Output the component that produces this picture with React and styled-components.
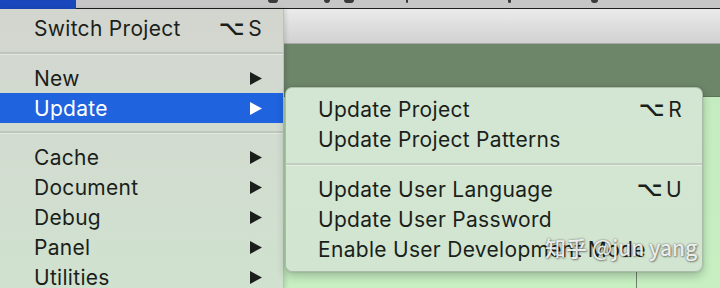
import React from 'react';
import styled, { createGlobalStyle } from 'styled-components';

const GlobalStyle = createGlobalStyle`
    html, body {
        margin: 0;
        padding: 0;
        width: 720px;
        height: 288px;
        overflow: hidden;
        background: #c7eec2;
    }
    * {
        box-sizing: border-box;
    }
`;

const Screen = styled.div`
    position: relative;
    width: 720px;
    height: 288px;
    display: flex;
    flex-direction: column;
    overflow: hidden;
    font-family: "Inter", "Liberation Sans", "DejaVu Sans", sans-serif;
    color: #1b1f1b;
`;

const MenuBar = styled.div`
    height: 9px;
    flex: none;
    display: flex;
    background: #c6c6c6;
`;

const MenuBarTitle = styled.div`
    width: 76px;
    background: #1a47bb;
`;

const MenuBarIcons = styled.div`
    flex: 1;
    display: flex;
    align-items: flex-start;
    padding-left: 192px;
    border-bottom: 1px solid #1e1e1e;
`;

const TrayGlyph = styled.div`
    width: ${p => p.w}px;
    height: 3px;
    margin-left: ${p => p.gap}px;
    background: #3a3a3a;
    border-radius: 0 0 3px 3px;
`;

const Body = styled.div`
    flex: 1;
    display: flex;
    min-height: 0;
`;

const MainMenu = styled.div`
    width: 284px;
    flex: none;
    padding-top: 4px;
    background: linear-gradient(180deg, #d3d5cf 0%, #d2dbd0 40%, #d0e2cf 100%);
    border-right: 1px solid #b9c2b6;
    box-shadow: 2px 0 4px rgba(0, 0, 0, 0.12);
    z-index: 1;
`;

const Row = styled.div`
    height: 30px;
    display: flex;
    align-items: center;
    padding-left: ${p => p.$indent}px;
    padding-right: ${p => p.$right}px;
    font-size: 21px;
    letter-spacing: 0.3px;
    background: ${p => (p.$active ? '#1f63df' : 'transparent')};
    color: ${p => (p.$active ? '#ffffff' : '#1b1f1b')};
`;

const Label = styled.span`
    flex: 1;
    white-space: nowrap;
`;

const Shortcut = styled.span`
    display: flex;
    align-items: center;
    gap: 5px;
    font-size: 21px;
    color: #1b1f1b;
`;

const OptionKey = styled.span`
    font-family: "DejaVu Sans", sans-serif;
    font-weight: bold;
    font-size: 20px;
    display: inline-block;
    transform: scaleX(1.12);
`;

const Separator = styled.div`
    height: ${p => p.$h}px;
    display: flex;
    align-items: center;

    &::after {
        content: '';
        flex: 1;
        height: 2px;
        background: #bfc6bc;
        border-bottom: 1px solid #e2e8e0;
    }
`;

const Window = styled.div`
    flex: 1;
    display: flex;
    flex-direction: column;
`;

const Toolbar = styled.div`
    height: 35px;
    flex: none;
    background: linear-gradient(180deg, #ebebeb 0%, #d1d1d1 100%);
    border-bottom: 1px solid #a9aaa8;
`;

const GreenBand = styled.div`
    height: 53px;
    flex: none;
    background: #6d8569;
    border-bottom: 1px solid #5d7359;
`;

const Content = styled.div`
    flex: 1;
    display: flex;
    background: linear-gradient(180deg, #c5ebc0 0%, #c7efc2 100%);
`;

const Divider = styled.div`
    width: 1px;
    margin-left: 352px;
    background: #6f7f6c;
`;

const SubMenu = styled.div`
    position: absolute;
    left: 285px;
    top: 87px;
    width: 418px;
    padding: 6px 0 7px;
    border-radius: 7px;
    background: linear-gradient(180deg, #d3e6d3 0%, #d2e5d0 100%);
    border: 1px solid rgba(120, 140, 118, 0.45);
    box-shadow: 0 4px 10px rgba(0, 0, 0, 0.22), 0 0 2px rgba(0, 0, 0, 0.2);
    z-index: 2;
`;

const SubSeparator = styled(Separator)`
    &::after {
        height: 2px;
        background: #c1cdbf;
        border-bottom: 1px solid #e4eee2;
    }
`;

const Watermark = styled.div`
    position: absolute;
    left: 545px;
    top: 232px;
    z-index: 3;
    font-family: "Noto Sans CJK SC", "Liberation Sans", sans-serif;
    font-size: 21px;
    font-weight: 500;
    color: rgba(255, 255, 255, 0.88);
    text-shadow: 0 0 2px rgba(0, 0, 0, 0.55), 1px 1px 2px rgba(0, 0, 0, 0.35);
    white-space: nowrap;
`;

const Arrow = ({ color }) => (
    <svg width="14" height="15" viewBox="0 0 14 15">
        <polygon points="1,1 13,7.5 1,14" fill={color} />
    </svg>
);

const Key = ({ k }) => (
    <Shortcut>
        <OptionKey>⌥</OptionKey>
        {k}
    </Shortcut>
);

const mainTop = [{ label: 'New' }, { label: 'Update', active: true }];
const mainBottom = ['Cache', 'Document', 'Debug', 'Panel', 'Utilities'];

const App = () => {
    return (
        <Screen>
            <GlobalStyle />
            <MenuBar>
                <MenuBarTitle />
                <MenuBarIcons>
                    <TrayGlyph w={10} gap={0} />
                    <TrayGlyph w={6} gap={46} />
                    <TrayGlyph w={10} gap={14} />
                    <TrayGlyph w={2} gap={52} />
                    <TrayGlyph w={3} gap={100} />
                    <TrayGlyph w={7} gap={80} />
                </MenuBarIcons>
            </MenuBar>
            <Body>
                <MainMenu>
                    <Row $indent={34} $right={21}>
                        <Label>Switch Project</Label>
                        <Key k="S" />
                    </Row>
                    <Separator $h={20} />
                    {mainTop.map(item => (
                        <Row key={item.label} $indent={34} $right={20} $active={item.active}>
                            <Label>{item.label}</Label>
                            <Arrow color={item.active ? '#ffffff' : '#1b1f1b'} />
                        </Row>
                    ))}
                    <Separator $h={19} />
                    {mainBottom.map(label => (
                        <Row key={label} $indent={34} $right={20}>
                            <Label>{label}</Label>
                            <Arrow color="#1b1f1b" />
                        </Row>
                    ))}
                </MainMenu>
                <Window>
                    <Toolbar />
                    <GreenBand />
                    <Content>
                        <Divider />
                    </Content>
                </Window>
            </Body>
            <SubMenu>
                <Row $indent={32} $right={20}>
                    <Label>Update Project</Label>
                    <Key k="R" />
                </Row>
                <Row $indent={32} $right={20}>
                    <Label>Update Project Patterns</Label>
                </Row>
                <SubSeparator $h={20} />
                <Row $indent={32} $right={20}>
                    <Label>Update User Language</Label>
                    <Key k="U" />
                </Row>
                <Row $indent={32} $right={20}>
                    <Label>Update User Password</Label>
                </Row>
                <Row $indent={32} $right={20}>
                    <Label>Enable User Development Mode</Label>
                </Row>
            </SubMenu>
            <Watermark>知乎 @jun yang</Watermark>
        </Screen>
    );
};

export default App;
